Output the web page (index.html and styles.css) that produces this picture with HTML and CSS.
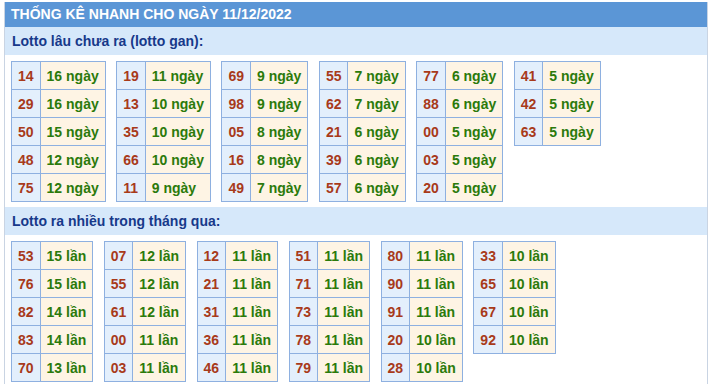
FILE: index.html
```html
<!DOCTYPE html>
<html lang="vi">
<head>
<meta charset="utf-8">
<title>Thống kê nhanh</title>
<link rel="stylesheet" href="styles.css">
</head>
<body>
<div class="box">
  <div class="title">THỐNG KÊ NHANH CHO NGÀY 11/12/2022</div>
  <div class="sub">Lotto lâu chưa ra (lotto gan):</div>
  <div class="grid">
    <table class="t"><tr><td class="n">14</td><td class="v">16 ngày</td></tr><tr><td class="n">29</td><td class="v">16 ngày</td></tr><tr><td class="n">50</td><td class="v">15 ngày</td></tr><tr><td class="n">48</td><td class="v">12 ngày</td></tr><tr><td class="n">75</td><td class="v">12 ngày</td></tr></table>
    <table class="t"><tr><td class="n">19</td><td class="v">11 ngày</td></tr><tr><td class="n">13</td><td class="v">10 ngày</td></tr><tr><td class="n">35</td><td class="v">10 ngày</td></tr><tr><td class="n">66</td><td class="v">10 ngày</td></tr><tr><td class="n">11</td><td class="v">9 ngày</td></tr></table>
    <table class="t"><tr><td class="n">69</td><td class="v">9 ngày</td></tr><tr><td class="n">98</td><td class="v">9 ngày</td></tr><tr><td class="n">05</td><td class="v">8 ngày</td></tr><tr><td class="n">16</td><td class="v">8 ngày</td></tr><tr><td class="n">49</td><td class="v">7 ngày</td></tr></table>
    <table class="t"><tr><td class="n">55</td><td class="v">7 ngày</td></tr><tr><td class="n">62</td><td class="v">7 ngày</td></tr><tr><td class="n">21</td><td class="v">6 ngày</td></tr><tr><td class="n">39</td><td class="v">6 ngày</td></tr><tr><td class="n">57</td><td class="v">6 ngày</td></tr></table>
    <table class="t"><tr><td class="n">77</td><td class="v">6 ngày</td></tr><tr><td class="n">88</td><td class="v">6 ngày</td></tr><tr><td class="n">00</td><td class="v">5 ngày</td></tr><tr><td class="n">03</td><td class="v">5 ngày</td></tr><tr><td class="n">20</td><td class="v">5 ngày</td></tr></table>
    <table class="t"><tr><td class="n">41</td><td class="v">5 ngày</td></tr><tr><td class="n">42</td><td class="v">5 ngày</td></tr><tr><td class="n">63</td><td class="v">5 ngày</td></tr></table>
  </div>
  <div class="sub">Lotto ra nhiều trong tháng qua:</div>
  <div class="grid last">
    <table class="t"><tr><td class="n">53</td><td class="v">15 lần</td></tr><tr><td class="n">76</td><td class="v">15 lần</td></tr><tr><td class="n">82</td><td class="v">14 lần</td></tr><tr><td class="n">83</td><td class="v">14 lần</td></tr><tr><td class="n">70</td><td class="v">13 lần</td></tr></table>
    <table class="t"><tr><td class="n">07</td><td class="v">12 lần</td></tr><tr><td class="n">55</td><td class="v">12 lần</td></tr><tr><td class="n">61</td><td class="v">12 lần</td></tr><tr><td class="n">00</td><td class="v">11 lần</td></tr><tr><td class="n">03</td><td class="v">11 lần</td></tr></table>
    <table class="t"><tr><td class="n">12</td><td class="v">11 lần</td></tr><tr><td class="n">21</td><td class="v">11 lần</td></tr><tr><td class="n">31</td><td class="v">11 lần</td></tr><tr><td class="n">36</td><td class="v">11 lần</td></tr><tr><td class="n">46</td><td class="v">11 lần</td></tr></table>
    <table class="t"><tr><td class="n">51</td><td class="v">11 lần</td></tr><tr><td class="n">71</td><td class="v">11 lần</td></tr><tr><td class="n">73</td><td class="v">11 lần</td></tr><tr><td class="n">78</td><td class="v">11 lần</td></tr><tr><td class="n">79</td><td class="v">11 lần</td></tr></table>
    <table class="t"><tr><td class="n">80</td><td class="v">11 lần</td></tr><tr><td class="n">90</td><td class="v">11 lần</td></tr><tr><td class="n">91</td><td class="v">11 lần</td></tr><tr><td class="n">20</td><td class="v">10 lần</td></tr><tr><td class="n">28</td><td class="v">10 lần</td></tr></table>
    <table class="t"><tr><td class="n">33</td><td class="v">10 lần</td></tr><tr><td class="n">65</td><td class="v">10 lần</td></tr><tr><td class="n">67</td><td class="v">10 lần</td></tr><tr><td class="n">92</td><td class="v">10 lần</td></tr></table>
  </div>
</div>
</body>
</html>
```
FILE: styles.css
```css
html, body {
  margin: 0;
  padding: 0;
  background: #ffffff;
}
body {
  font-family: "Liberation Sans", Arial, sans-serif;
  font-size: 14px;
  font-weight: bold;
}
.box {
  margin: 2px 7px 0 4px;
  border-left: 1px solid #c9d4e3;
  border-right: 1px solid #c9d4e3;
  padding-bottom: 2px;
}
.title {
  background: #5b96d6;
  color: #ffffff;
  height: 25px;
  line-height: 25px;
  padding-left: 6px;
}
.sub {
  background: #d6e8fa;
  color: #17398a;
  height: 28px;
  line-height: 28px;
  padding-left: 7px;
}
.grid {
  display: flex;
  align-items: flex-start;
  gap: 10.5px;
  padding: 6px 6px 5px;
}
.grid.last {
  padding-bottom: 0;
}
.t {
  border-collapse: collapse;
}
.t td {
  border: 1px solid #8eb0e0;
  height: 27px;
  padding: 0 6px;
  white-space: nowrap;
}
.t .n {
  background: #e3effc;
  color: #a83a1a;
}
.t .v {
  background: #fef4e4;
  color: #2b7a0b;
}
```
